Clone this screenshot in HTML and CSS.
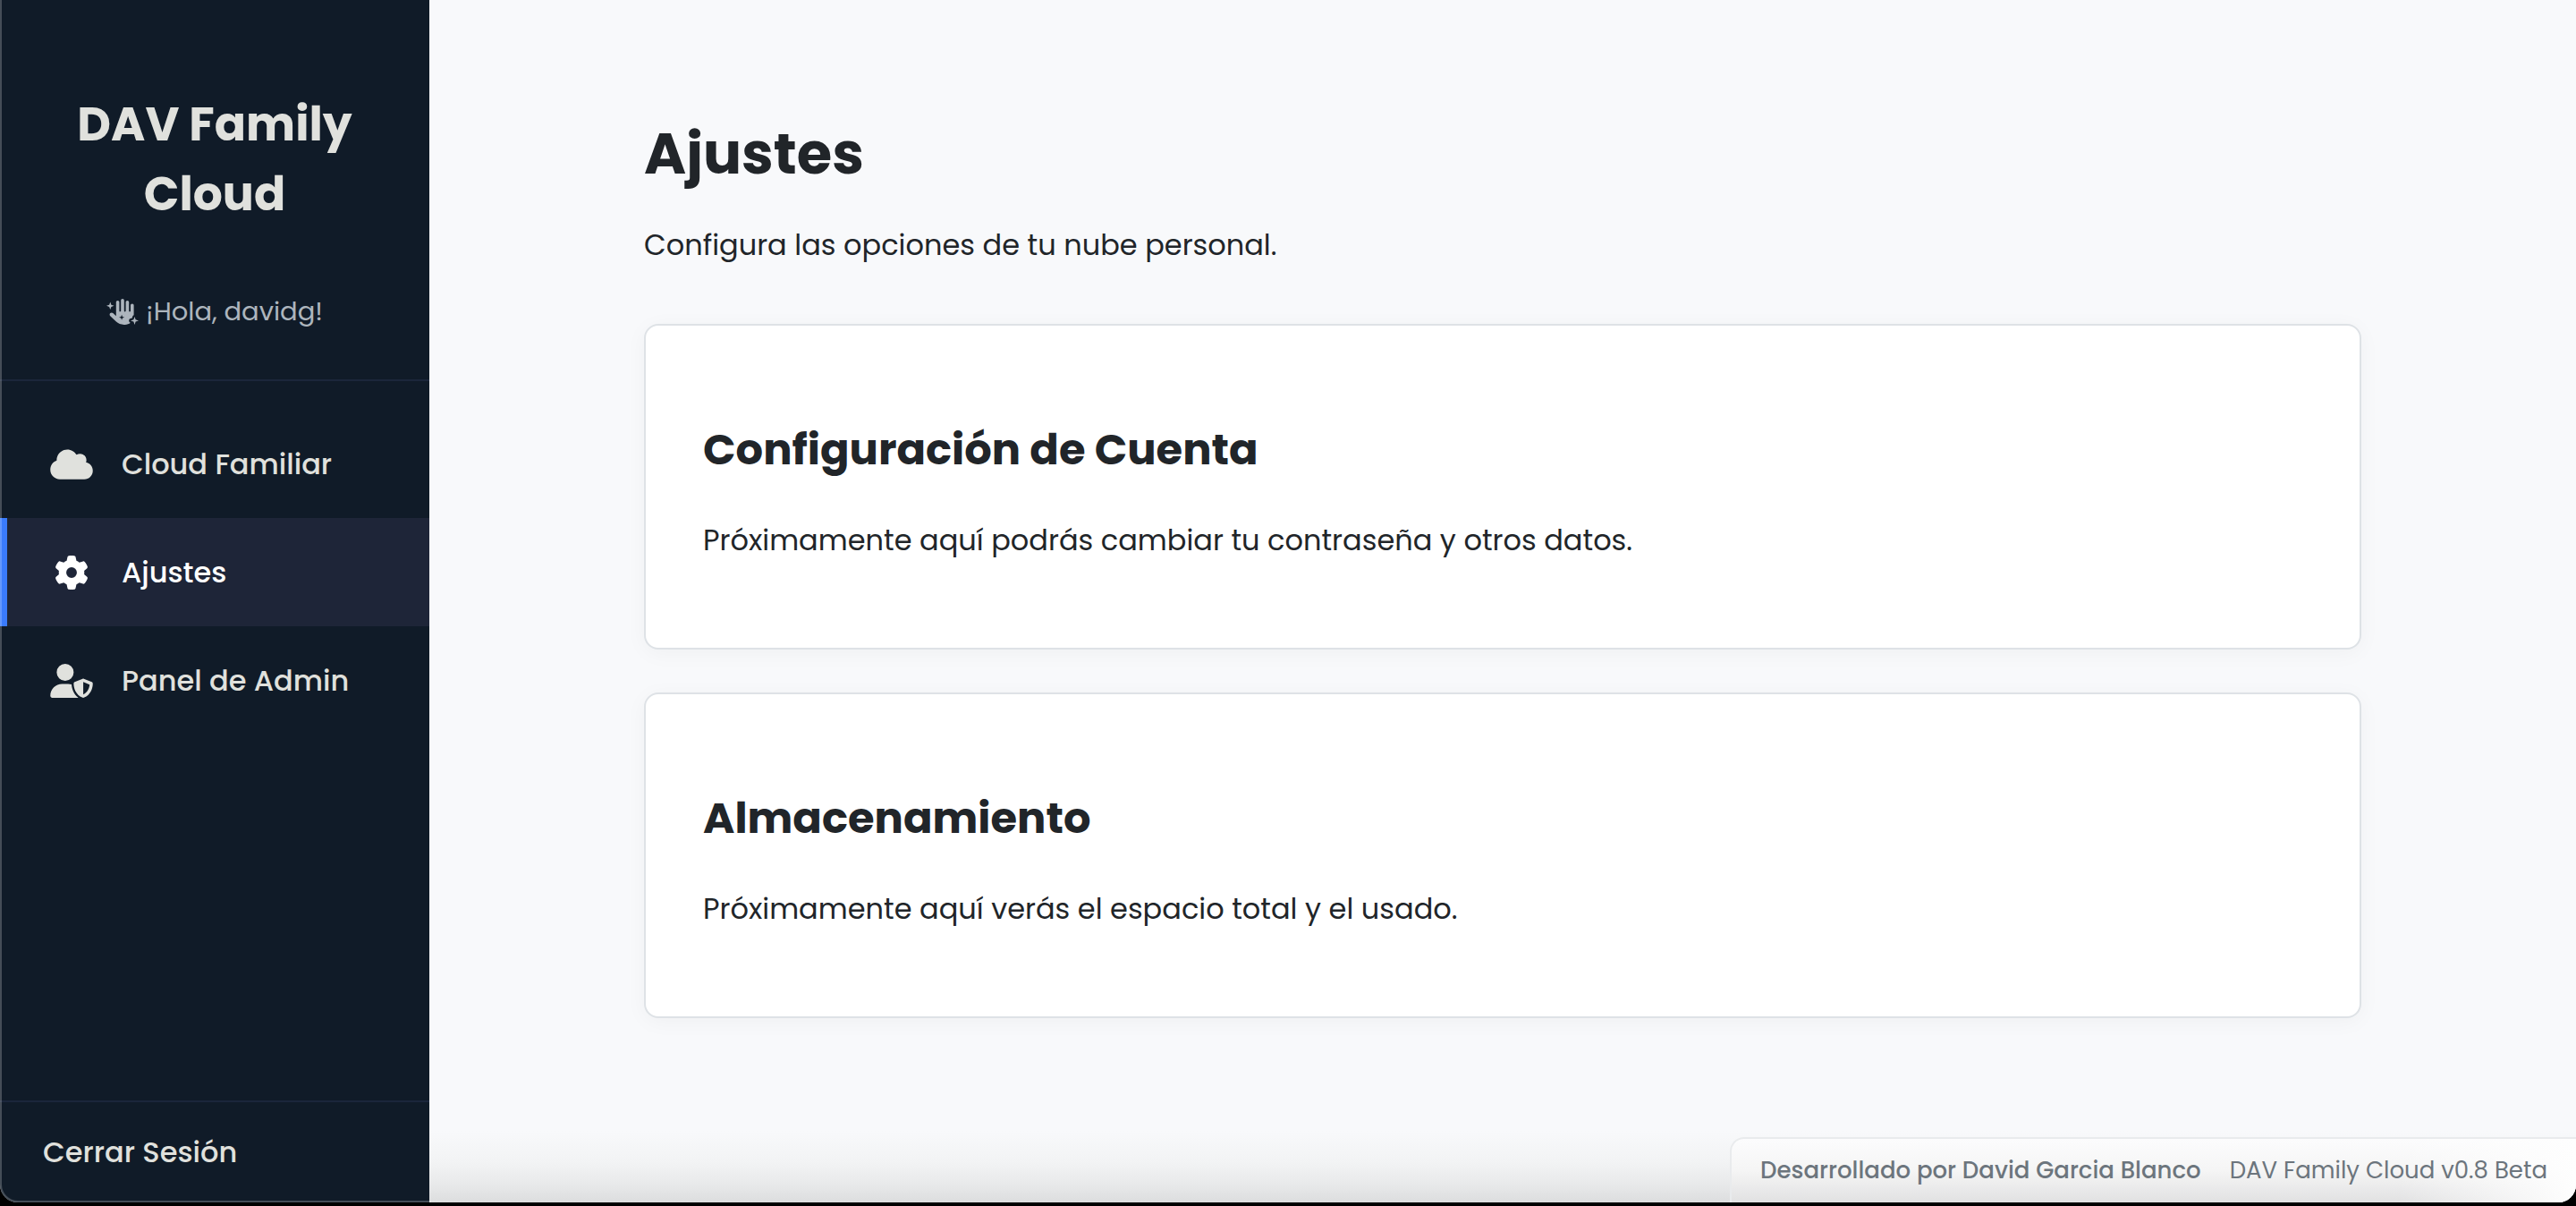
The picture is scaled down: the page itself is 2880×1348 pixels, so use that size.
FILE: index.html
```html
<!DOCTYPE html>
<html lang="es">
<head>
<meta charset="utf-8">
<title>Ajustes - DAV Family Cloud</title>
<link rel="stylesheet" href="styles.css">
</head>
<body>
<div class="window">
  <aside class="sidebar">
    <header class="sidebar-header">
      <h2 class="brand">DAV Family Cloud</h2>
      <p class="greeting">
        <svg class="greeting-icon" viewBox="0 0 640 512" aria-hidden="true"><path fill-rule="evenodd" d="M320 0c17.7 0 32 14.3 32 32V240c0 8.8 7.2 16 16 16s16-7.2 16-16V64c0-17.7 14.3-32 32-32s32 14.3 32 32V240c0 8.8 7.2 16 16 16s16-7.2 16-16V128c0-17.7 14.3-32 32-32s32 14.3 32 32V323.1c-11.9 4.8-21.3 14.9-25 27.8l-8.9 31.2L478.9 391C460.6 396.3 448 413 448 432c0 18.9 12.5 35.6 30.6 40.9C448.4 497.4 409.9 512 368 512H348.8c-59.6 0-116.900-22.900-160-64L76.400 341c-16-15.200-16.600-40.600-1.400-56.600s40.600-16.600 56.600-1.400l60.500 57.600c0-1.500-.1-3.100-.1-4.600V64c0-17.700 14.300-32 32-32s32 14.300 32 32V240c0 8.800 7.200 16 16 16s16-7.200 16-16V32c0-17.700 14.300-32 32-32zM304 314l-14 40-40 14 40 14 14 40 14-40 40-14-40-14z"/><path d="M76 60l20 56 56 20-56 20-20 56-20-56-56-20 56-20zM560 352l20 60 60 20-60 20-20 60-20-60-60-20 60-20z"/></svg>
        <span>¡Hola, davidg!</span>
      </p>
    </header>
    <nav class="nav">
      <a class="nav-link" href="#cloud">
        <svg class="nav-icon" viewBox="0 0 640 512" aria-hidden="true"><path d="M0 336c0 79.500 64.500 144 144 144H512c70.700 0 128-57.300 128-128c0-61.900-44-113.600-102.400-125.400c4.100-10.700 6.400-22.400 6.400-34.600c0-53-43-96-96-96c-19.700 0-38.100 6-53.300 16.200C367 64.200 315.300 32 256 32C167.600 32 96 103.600 96 192c0 2.700 .1 5.400 .2 8.100C40.200 219.800 0 273.200 0 336z"/></svg>
        <span>Cloud Familiar</span>
      </a>
      <a class="nav-link active" href="#ajustes" aria-current="page">
        <svg class="nav-icon" viewBox="-64 0 640 512" aria-hidden="true"><path d="M495.900 166.600c3.200 8.700 .5 18.400-6.400 24.600l-43.300 39.400c1.100 8.300 1.700 16.800 1.700 25.400s-.6 17.100-1.700 25.400l43.300 39.400c6.900 6.200 9.600 15.900 6.400 24.600c-4.400 11.900-9.700 23.300-15.800 34.300l-4.700 8.100c-6.600 11-14 21.400-22.100 31.200c-5.900 7.200-15.700 9.600-24.500 6.800l-55.700-17.700c-13.400 10.300-28.200 18.900-44 25.400l-12.500 57.100c-2 9.100-9 16.300-18.200 17.800c-13.800 2.300-28 3.500-42.500 3.500s-28.700-1.200-42.500-3.500c-9.200-1.500-16.200-8.700-18.200-17.800l-12.500-57.100c-15.800-6.500-30.600-15.100-44-25.400L83.100 425.900c-8.800 2.800-18.600 .3-24.500-6.800c-8.100-9.800-15.500-20.200-22.100-31.200l-4.700-8.100c-6.100-11-11.400-22.400-15.800-34.300c-3.200-8.700-.5-18.400 6.400-24.600l43.300-39.400C64.600 273.100 64 264.600 64 256s.6-17.100 1.700-25.400L22.400 191.200c-6.900-6.200-9.600-15.900-6.400-24.600c4.400-11.900 9.700-23.300 15.800-34.300l4.700-8.100c6.600-11 14-21.400 22.100-31.200c5.900-7.200 15.700-9.600 24.500-6.800l55.700 17.700c13.400-10.300 28.200-18.900 44-25.400l12.500-57.100c2-9.100 9-16.300 18.200-17.800C227.300 1.200 241.500 0 256 0s28.700 1.200 42.500 3.500c9.200 1.500 16.200 8.700 18.200 17.800l12.500 57.100c15.800 6.500 30.600 15.100 44 25.400l55.700-17.700c8.800-2.800 18.600-.3 24.500 6.800c8.100 9.800 15.500 20.200 22.100 31.200l4.700 8.100c6.100 11 11.400 22.400 15.800 34.300zM256 336a80 80 0 1 0 0-160 80 80 0 1 0 0 160z"/></svg>
        <span>Ajustes</span>
      </a>
      <a class="nav-link" href="#admin">
        <svg class="nav-icon" viewBox="0 0 640 512" aria-hidden="true"><path d="M224 256A128 128 0 1 0 224 0a128 128 0 1 0 0 256zm-45.700 48C79.800 304 0 383.800 0 482.300C0 498.700 13.300 512 29.700 512H418.300c1.800 0 3.500-.2 5.300-.5c-76.300-55.100-99.800-141-103.100-200.200c-16.100-4.800-33.100-7.300-50.700-7.300H178.300zm308.800-78.300l-120 48C358 277.400 352 286.200 352 296c0 63.300 25.900 168.800 134.800 214.200c5.900 2.500 12.600 2.500 18.500 0C614.100 464.800 640 359.300 640 296c0-9.800-6-18.600-15.100-22.300l-120-48c-5.700-2.300-12.100-2.300-17.800 0zM591.400 312c-3.900 50.700-27.200 116.700-95.400 149.700V273.800L591.400 312z"/></svg>
        <span>Panel de Admin</span>
      </a>
    </nav>
    <footer class="sidebar-footer"><a class="logout" href="#salir">Cerrar Sesión</a></footer>
  </aside>
  <main class="main">
    <div class="content">
      <h1 class="page-title">Ajustes</h1>
      <p class="text">Configura las opciones de tu nube personal.</p>
      <section class="card">
        <h2 class="card-title">Configuración de Cuenta</h2>
        <p class="text">Próximamente aquí podrás cambiar tu contraseña y otros datos.</p>
      </section>
      <section class="card">
        <h2 class="card-title">Almacenamiento</h2>
        <p class="text">Próximamente aquí verás el espacio total y el usado.</p>
      </section>
    </div>
  </main>
  <div class="credits">
    <strong class="author">Desarrollado por David Garcia Blanco</strong>
    <span>DAV Family Cloud v0.8 Beta</span>
  </div>
</div>
</body>
</html>
```
FILE: styles.css
```css
* { box-sizing: border-box; }

body {
  margin: 0;
  padding-bottom: 4px;
  background: #000;
  color: #212529;
  font-family: Poppins, Inter, sans-serif;
  font-size: 32px;
  line-height: 52px;
}

h1, h2, p { margin: 0; }
a { color: inherit; text-decoration: none; }
svg { display: block; flex: none; fill: currentColor; }

.window {
  position: relative;
  display: flex;
  min-height: calc(100vh - 4px);
  overflow: hidden;
  border-radius: 0 0 20px 20px;
  background: #f8f9fb;
}

/* Light edge of the window frame */
.window::after {
  content: "";
  position: absolute;
  inset: 0 auto 0 0;
  width: 480px;
  border: solid rgba(255, 255, 255, .22);
  border-width: 0 0 2px 2px;
  border-bottom-left-radius: 20px;
  pointer-events: none;
}

.sidebar {
  flex: none;
  display: flex;
  flex-direction: column;
  width: 480px;
  background: #101b28;
  color: #e0e1dd;
}

.sidebar-header {
  padding: 100px 48px 52px;
  border-bottom: 2px solid #1b263b;
  text-align: center;
}

.brand {
  font-size: 52px;
  font-weight: 700;
  line-height: 78px;
}

.greeting {
  display: flex;
  align-items: center;
  justify-content: center;
  gap: 8px;
  margin-top: 68px;
  color: #adb5bd;
  font-size: 29px;
  line-height: 48px;
}

.greeting-icon { width: 36px; height: 29px; }

.nav { flex: 1; padding-top: 32px; }

.nav-link {
  display: flex;
  align-items: center;
  gap: 32px;
  height: 121px;
  padding: 0 48px;
  border-left: 8px solid transparent;
  font-weight: 500;
}

.nav-link.active {
  border-left-color: #3a7bfd;
  background: #1e2538;
  color: #fff;
}

.nav-icon { width: 48px; height: 38px; }

.sidebar-footer {
  padding: 30px 48px;
  border-top: 2px solid #1b263b;
  font-weight: 500;
}

.logout { display: block; }

.main {
  flex: 1;
  padding: 122px 64px;
  background: linear-gradient(to top, #dcddde, #e8e9ea 20px, #f2f3f4 44px, #f8f9fb 80px);
}

.content {
  max-width: 1920px;
  margin: 0 auto;
}

.page-title {
  margin-bottom: 26px;
  font-size: 64px;
  font-weight: 700;
  line-height: 100px;
}

.card {
  margin-top: 62px;
  padding: 100px 64px 94px;
  border: 2px solid #dee2e6;
  border-radius: 16px;
  background: #fff;
  box-shadow: 0 4px 24px rgba(0, 0, 0, .04);
}

.card + .card { margin-top: 48px; }

.card-title {
  margin-bottom: 36px;
  font-size: 48px;
  font-weight: 700;
  line-height: 78px;
}

/* Pinned over the bottom right corner of the page */
.credits {
  position: absolute;
  right: 0;
  bottom: 0;
  display: flex;
  align-items: center;
  gap: 32px;
  padding: 16px 32px;
  border: solid #e9ebed;
  border-width: 2px 0 0 2px;
  border-top-left-radius: 16px;
  background: linear-gradient(to left, #fefefe, rgba(254, 254, 254, 0) 200px), linear-gradient(#fcfcfd, #f5f5f5 50%, #e1e1e2);
  color: #6c757d;
  font-size: 26px;
  line-height: 39px;
}

.author { font-weight: 500; }
```
